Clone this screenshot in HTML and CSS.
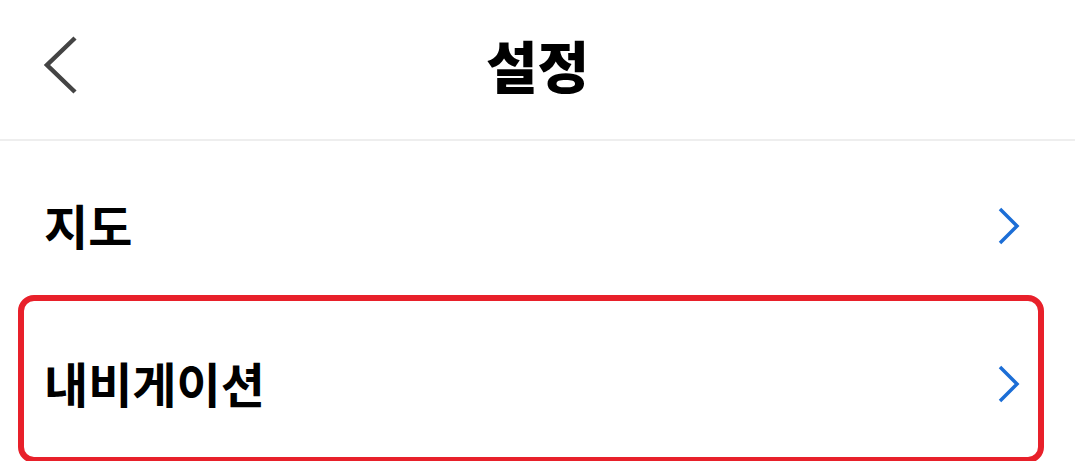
FILE: index.html
```html
<!DOCTYPE html>
<html lang="ko">
<head>
  <meta charset="UTF-8">
  <title>설정</title>
  <link rel="stylesheet" href="styles.css">
</head>
<body>
  <header class="topbar">
    <a class="back" href="#">
      <svg width="36" height="62" viewBox="0 0 36 62">
        <path d="M32 4 L4 31 L32 58" fill="none" stroke="#444" stroke-width="4.5"/>
      </svg>
    </a>
    <h1>설정</h1>
  </header>

  <ul class="settings">
    <li class="row">
      <span class="label">지도</span>
      <svg class="chev" width="24" height="40" viewBox="0 0 24 40">
        <path d="M3 3 L20 20 L3 37" fill="none" stroke="#1c6ed6" stroke-width="3.5"/>
      </svg>
    </li>
    <li class="row marked">
      <span class="label">내비게이션</span>
      <svg class="chev" width="24" height="40" viewBox="0 0 24 40">
        <path d="M3 3 L20 20 L3 37" fill="none" stroke="#1c6ed6" stroke-width="3.5"/>
      </svg>
    </li>
  </ul>
</body>
</html>
```

FILE: styles.css
```css
body {
  margin: 0;
  background-color: #fff;
  font-family: "Noto Sans CJK KR", "Noto Sans", sans-serif;
  color: #000;
}

.topbar {
  position: relative;
  height: 139px;
  border-bottom: 2px solid #eee; /* thin grey divider */
  display: flex;
  align-items: center;
  justify-content: center;
}

.back {
  position: absolute;
  left: 43px;
  top: 34px;
  display: block;
}

.topbar h1 {
  margin: 0 0 12px;
  font-size: 56px;
  font-weight: 900;
  line-height: 1;
}

.settings {
  list-style: none;
  margin: 0;
  padding: 4px 0 0;
}

.row {
  position: relative;
  height: 158px;
  display: flex;
  align-items: center;
  justify-content: space-between;
  padding: 0 54px 0 44px;
}

.label {
  font-size: 48px;
  font-weight: 700;
  line-height: 1;
}

.chev {
  display: block;
  margin-top: 4px;
}

/* red highlight frame round the selected row */
.row.marked::after {
  content: "";
  position: absolute;
  top: -8px;
  left: 18px;
  right: 31px;
  bottom: -2px;
  border: 6px solid #e8202a;
  border-radius: 16px;
}
```
